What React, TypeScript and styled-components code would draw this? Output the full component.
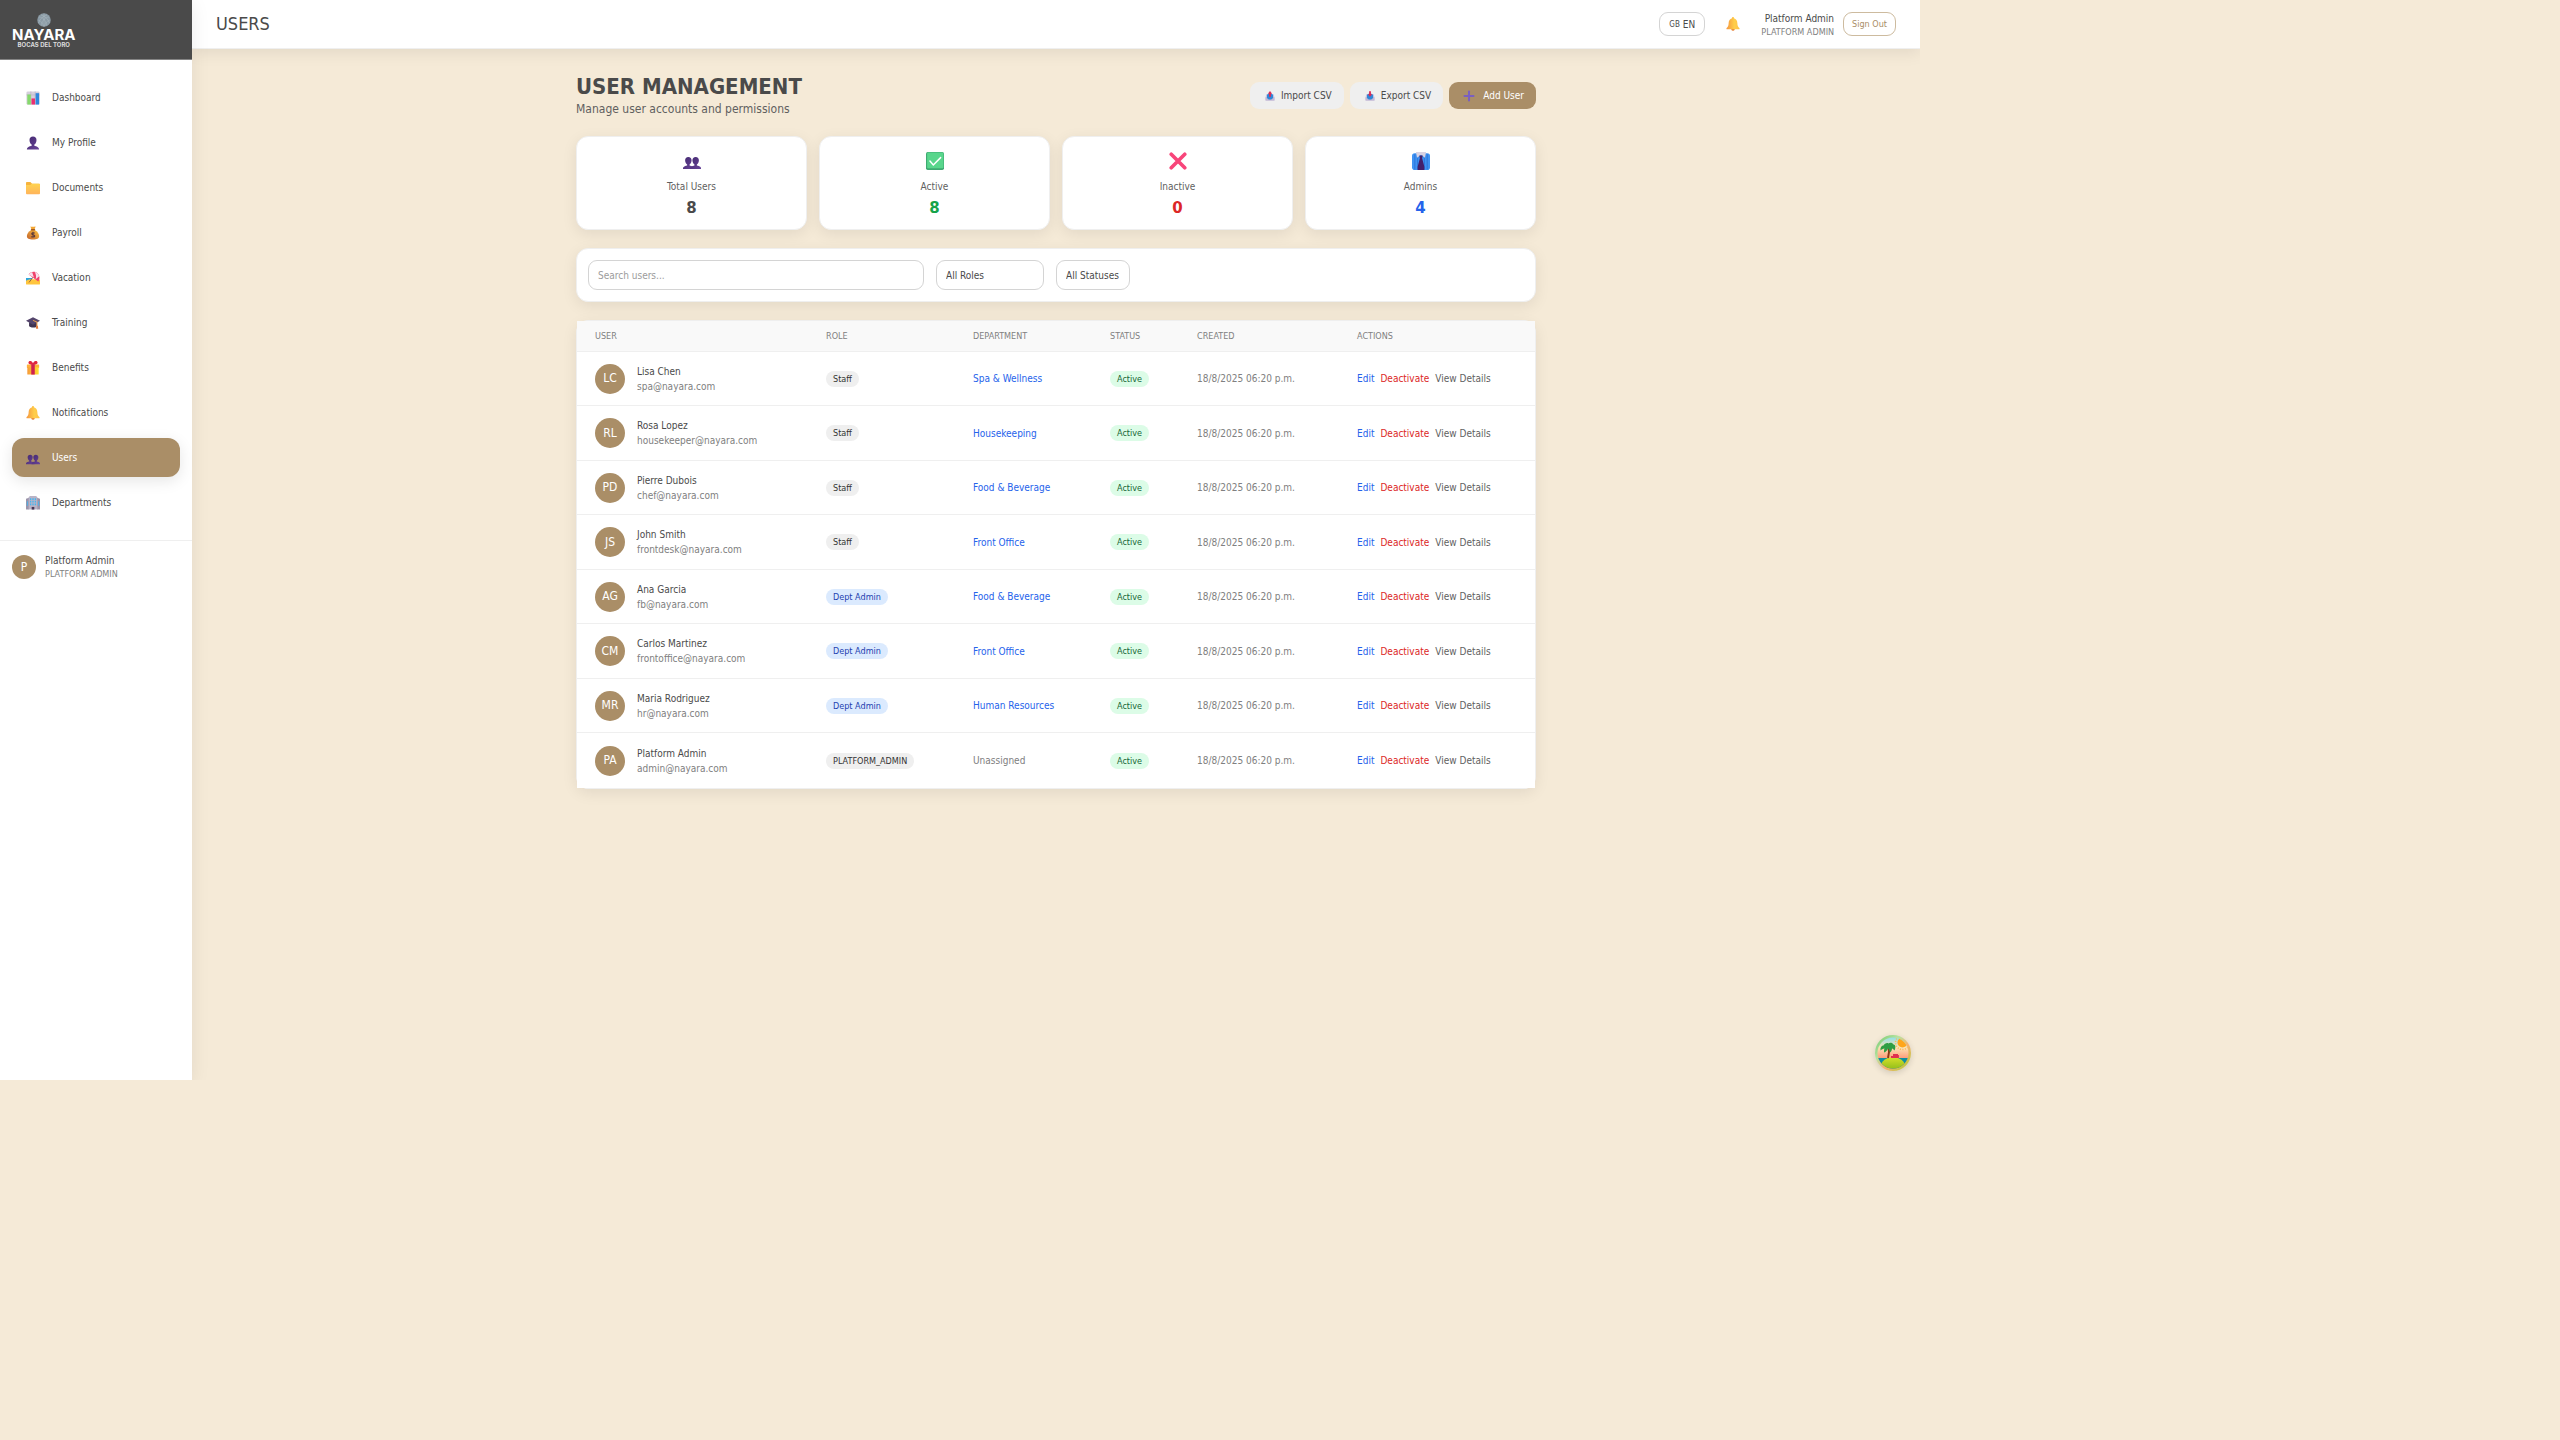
import React from "react";
import styled, { createGlobalStyle, css } from "styled-components";

const sans = `"DejaVu Sans Condensed", Tahoma, "DejaVu Sans", "Noto Sans", sans-serif`;

const color = {
  sand: "#f5ead7",
  brand: "#aa8e67",
  ink: "#4a4a4a",
  body: "#5f5f5f",
  muted: "#808080",
  line: "#efefef",
  field: "#d4d4d4",
  blue: "#2563eb",
  red: "#dc2626",
  green: "#16a34a",
};

const GlobalStyle = createGlobalStyle`
  *, *::before, *::after { box-sizing: border-box; }
  body { margin: 0; background: ${color.sand}; font-family: ${sans}; color: ${color.ink}; }
  h1, h2, p, ul { margin: 0; padding: 0; }
  button, input, select { font-family: inherit; margin: 0; }
  a { text-decoration: none; color: inherit; }
`;

/* ---------- icons ---------- */

const Svg = styled.svg<{ $size: number }>`
  display: block;
  flex: none;
  width: ${(p) => p.$size}px;
  height: ${(p) => p.$size}px;
`;

const Person = ({ x = 0, s = 1, y = 0 }: { x?: number; s?: number; y?: number }) => (
  <g transform={`translate(${x} ${y}) scale(${s})`}>
    <path d="M16 1c5 0 8 3.400 8 8 0 4.500-2 9-5 10.500V22c5 1 11 3 11 9H2c0-6 6-8 11-9v-2.500C10 18 8 13.500 8 9c0-4.600 3-8 8-8z" fill="url(#violet)" />
  </g>
);

const glyphs: Record<string, React.ReactNode> = {
  chart: (
    <>
      <rect x="1" y="1" width="30" height="30" rx="3" fill="#d5cfdc" />
      <path d="M1 9h30M11 1v30M21 1v30" stroke="#b9b1c4" strokeWidth="1.500" />
      <rect x="3" y="8" width="8" height="23" fill="#86d96c" />
      <rect x="12.500" y="17" width="8" height="14" fill="#ea2f70" />
      <rect x="22" y="5" width="8" height="26" fill="#2f86dd" />
    </>
  ),
  person: <Person />,
  people: (
    <>
      <Person x={-2} y={8} s={0.72} />
      <Person x={11} y={8} s={0.72} />
    </>
  ),
  folder: (
    <>
      <path d="M0 4a2 2 0 0 1 2-2h8l4 4h16a2 2 0 0 1 2 2v8H0z" fill="#f7b33c" />
      <path d="M0 9h10l3-3h17a2 2 0 0 1 2 2v20a2 2 0 0 1-2 2H2a2 2 0 0 1-2-2z" fill="url(#folder)" />
    </>
  ),
  money: (
    <>
      <path d="M10 1c4 2 8 0 12 0l-3 8h-6z" fill="#f3a633" />
      <path d="M12 9h8c6 3 10 9 10 14 0 6-5 8-14 8S2 29 2 23c0-5 4-11 10-14z" fill="url(#gold)" />
      <rect x="11" y="7" width="10" height="3" rx="1.500" fill="#a35a20" />
      <path d="M20 16.500c-1-1.500-7-2-7 1.200 0 3 7 2 7 5.300s-7 2.500-8 .800M16 13v13" fill="none" stroke="#5b3a3a" strokeWidth="2.400" />
    </>
  ),
  beach: (
    <>
      <path d="M0 16h14l-2 8H0z" fill="#2ba4dc" />
      <path d="M0 22c8-4 20-3 32-2v9a2 2 0 0 1-2 2H2a2 2 0 0 1-2-2z" fill="#ffc53d" />
      <path d="M17 13L7 26" stroke="#8a5a3c" strokeWidth="2" />
      <path d="M6 8C10 1 20 0 26 5s6 13 2 19z" fill="#f0426b" />
      <path d="M6 8c2-3 5-5 8-6l4 13zM20 2c5 1 9 5 10 10l-8 7c2-6 1-12-2-17z" fill="#f5e3ee" />
    </>
  ),
  cap: (
    <>
      <path d="M7 14v9c0 4 18 5 18 0v-9z" fill="#3f3350" />
      <path d="M16 3l16 8-16 9L0 11z" fill="#54456c" />
      <path d="M16 10l9 4v13" fill="none" stroke="#f0a04b" strokeWidth="2.400" />
      <path d="M23 22h4l1 7h-5z" fill="#e57a3a" />
    </>
  ),
  gift: (
    <>
      <rect x="2" y="8" width="28" height="8" rx="1" fill="#ffb13b" />
      <rect x="3" y="14" width="26" height="17" rx="1" fill="url(#gift)" />
      <rect x="12" y="7" width="8" height="24" fill="#cf2150" />
      <path d="M16 8C8 9 4 6 6 2s8-2 10 3c2-5 8-7 10-3s-2 7-10 6z" fill="#e0263f" />
    </>
  ),
  bell: (
    <>
      <circle cx="16" cy="28" r="3.500" fill="#e57f35" />
      <path d="M16 0c1.500 0 2.300 1 2.300 2.600C23 4 26 8 26 14c0 6 2 8 4.500 11 1 1.500.500 3-1 3h-27c-1.500 0-2-1.500-1-3C4 22 6 20 6 14c0-6 3-10 7.700-11.400C13.700 1 14.500 0 16 0z" fill="url(#bell)" />
    </>
  ),
  building: (
    <>
      <path d="M0 6l7-2v27H0zM32 6l-7-2v27h7z" fill="#9b94aa" />
      <path d="M6 3l3-3h14l3 3v28H6z" fill="#b9b3c6" />
      <path d="M9 5h3v4H9zM14.500 5h3v4h-3zM20 5h3v4h-3zM9 11h3v4H9zM14.500 11h3v4h-3zM20 11h3v4h-3zM9 17h3v4H9zM14.500 17h3v4h-3zM20 17h3v4h-3zM2 12h2v10H2zM28 12h2v10h-2z" fill="#41b6f2" />
      <path d="M13 25h6v6h-6z" fill="#453655" />
    </>
  ),
  check: (
    <>
      <rect x="0" y="0" width="32" height="32" rx="3" fill="#3faa72" />
      <rect x="2" y="1" width="29" height="28" rx="2" fill="#59d68c" />
      <path d="M7 16l6 7 13-13" fill="none" stroke="#fff" strokeWidth="2.600" strokeLinecap="round" />
    </>
  ),
  cross: <path d="M4 4l24 24M28 4L4 28" stroke="#f8457a" strokeWidth="6.500" strokeLinecap="round" />,
  tie: (
    <>
      <rect x="0" y="2" width="32" height="30" rx="5" fill="#3f93f2" />
      <path d="M5 4v27M10 8v23M22 8v23M27 4v27" stroke="#2a6fd4" strokeWidth="1.500" />
      <path d="M7 0h18l-2 10-7-5-7 5z" fill="#d9d3e3" />
      <path d="M13 6h6l-1 5 4 15v6H10v-6l4-15z" fill="#44206b" />
    </>
  ),
  tray: (
    <>
      <path d="M4 10h24l3 12H1z" fill="#d6cee3" />
      <rect x="1" y="20" width="30" height="11" rx="2" fill="#c3b9d6" />
      <path d="M6 12l5-3h10l5 3v10l-6 5h-8l-6-5z" fill="#2f86d8" />
    </>
  ),
  up: <path d="M16 0l7 9h-4v9h-6V9H9z" fill="#dc2b55" />,
  down: <path d="M16 18l7-8h-4V1h-6v9H9z" fill="#dc2b55" />,
  plus: <path d="M16 4v24M4 16h24" stroke="#7a5fc0" strokeWidth="5.500" strokeLinecap="round" />,
};

const Icon = ({ names, size }: { names: string[]; size: number }) => (
  <Svg $size={size} viewBox="0 0 32 32" aria-hidden="true">
    {names.map((n) => (
      <React.Fragment key={n}>{glyphs[n]}</React.Fragment>
    ))}
  </Svg>
);

const Gradients = () => (
  <Svg $size={0} aria-hidden="true">
    <defs>
      <linearGradient id="violet" x1="0" y1="0" x2="1" y2="1">
        <stop offset="0" stopColor="#43296f" />
        <stop offset="1" stopColor="#694499" />
      </linearGradient>
      <linearGradient id="folder" x1="0" y1="0" x2="0" y2="1">
        <stop offset="0" stopColor="#ffd44f" />
        <stop offset="1" stopColor="#ffb45b" />
      </linearGradient>
      <linearGradient id="gold" x1="1" y1="0" x2="0" y2="1">
        <stop offset="0" stopColor="#ffc341" />
        <stop offset="1" stopColor="#c2632c" />
      </linearGradient>
      <linearGradient id="gift" x1="0" y1="0" x2="1" y2="0">
        <stop offset="0" stopColor="#f79a3a" />
        <stop offset="1" stopColor="#ffe02e" />
      </linearGradient>
      <linearGradient id="bell" x1="0" y1="0" x2="1" y2="0">
        <stop offset="0" stopColor="#f5963f" />
        <stop offset="0.6" stopColor="#ffce4a" />
        <stop offset="1" stopColor="#ffc24a" />
      </linearGradient>
    </defs>
  </Svg>
);

const Island = () => (
  <Svg $size={36} viewBox="0 0 36 36" aria-hidden="true">
    <defs>
      <linearGradient id="rim" x1="0" y1="0" x2="1" y2="1">
        <stop offset="0" stopColor="#6cc76c" />
        <stop offset="0.35" stopColor="#b8e3a0" />
        <stop offset="0.6" stopColor="#f6b070" />
        <stop offset="1" stopColor="#a5d32c" />
      </linearGradient>
      <linearGradient id="sky" x1="0" y1="0" x2="0" y2="1">
        <stop offset="0" stopColor="#78def4" />
        <stop offset="0.35" stopColor="#fbe3b4" />
        <stop offset="0.7" stopColor="#ff8f70" />
      </linearGradient>
      <linearGradient id="hill" x1="0" y1="0" x2="0" y2="1">
        <stop offset="0" stopColor="#d8e02a" />
        <stop offset="1" stopColor="#6fae12" />
      </linearGradient>
      <clipPath id="disc">
        <circle cx="18" cy="18" r="15.500" />
      </clipPath>
    </defs>
    <circle cx="18" cy="18" r="18" fill="url(#rim)" />
    <g clipPath="url(#disc)">
      <rect width="36" height="36" fill="url(#sky)" />
      <circle cx="27.500" cy="7.500" r="7" fill="none" stroke="#ffb648" strokeWidth="1.500" strokeDasharray="1 1.500" />
      <circle cx="27.500" cy="7.500" r="5" fill="#ffa61a" />
      <rect y="23" width="36" height="13" fill="#0f8f9f" />
      <ellipse cx="18" cy="31" rx="12" ry="9" fill="url(#hill)" />
      <path d="M16 22h7v-2M18 20h5" stroke="#e0304f" strokeWidth="1.800" fill="none" />
      <path d="M13.500 12c1 4 .500 8-.500 11" stroke="#8d3b14" strokeWidth="2" fill="none" />
    </g>
    <path
      d="M13.500 8.500c1-1 4-1 5 1 2 0 2.500 3 1 6-1-1-1.500-2-2.500-2 0 2-1 3-2 4-.500-2-1-3-2-4-1 2-2 3.500-4 4 0-2 0-3 .500-4-1.500 0-3 1-4 2-.500-3 1-5 3-5 1-2 3.500-3 5-2z"
      fill="#2f9e44"
    />
  </Svg>
);

/* ---------- shell ---------- */

const Shell = styled.div`
  position: relative;
  display: flex;
  width: 75vw;
  min-height: 75vh;
  overflow: hidden;
`;

const Sidebar = styled.aside`
  position: relative;
  z-index: 1;
  flex: none;
  width: 192px;
  background: #fff;
  box-shadow: 0 4px 18px rgba(0, 0, 0, 0.08);
`;

const Brand = styled.div`
  display: flex;
  height: 60px;
  padding: 0 12px;
  background: ${color.ink};
  border-bottom: 1px solid #848484;
`;

const Logo = styled.div`
  display: flex;
  flex-direction: column;
  align-items: center;
  padding-top: 13px;
  color: #fff;
  font-family: Inter, sans-serif;
  font-weight: 700;
  white-space: nowrap;
`;

const LogoName = styled.span`
  margin-top: 1px;
  font-size: 15px;
  line-height: 14px;
`;

const LogoPlace = styled.span`
  font-size: 6px;
  line-height: 6px;
  color: #dcdcdc;
`;

const NavList = styled.ul`
  display: flex;
  flex-direction: column;
  gap: 6px;
  padding: 18px 12px;
  list-style: none;
`;

const NavLink = styled.a<{ $active?: boolean }>`
  display: flex;
  align-items: center;
  gap: 12px;
  height: 39px;
  padding: 0 14px;
  border-radius: 12px;
  font-size: 10px;
  line-height: 15px;
  ${(p) =>
    p.$active &&
    css`
      background: ${color.brand};
      color: #fff;
      box-shadow: 0 4px 15px rgba(0, 0, 0, 0.1);
    `}
`;

const Account = styled.div`
  display: flex;
  align-items: center;
  gap: 9px;
  padding: 12px;
  border-top: 1px solid ${color.line};
`;

const Avatar = styled.span<{ $size: number }>`
  display: flex;
  flex: none;
  align-items: center;
  justify-content: center;
  width: ${(p) => p.$size}px;
  height: ${(p) => p.$size}px;
  border-radius: 50%;
  background: ${color.brand};
  color: #fff;
  font-size: 12px;
`;

const Identity = styled.div<{ $right?: boolean }>`
  text-align: ${(p) => (p.$right ? "right" : "left")};
`;

const IdentityName = styled.p`
  font-size: 10px;
  line-height: 15px;
`;

const IdentityRole = styled.p`
  font-size: 9px;
  line-height: 12px;
  color: ${color.muted};
`;

const Page = styled.div`
  flex: 1;
  min-width: 0;
`;

const TopBar = styled.header`
  display: flex;
  align-items: center;
  justify-content: space-between;
  height: 49px;
  padding: 0 24px;
  background: #fff;
  border-bottom: 1px solid ${color.line};
  box-shadow: 0 4px 15px rgba(0, 0, 0, 0.08);
`;

const TopTitle = styled.h2`
  font-size: 18px;
  line-height: 24px;
  font-weight: 400;
`;

const TopTools = styled.div`
  display: flex;
  align-items: center;
  gap: 9px;
`;

const OutlineButton = styled.button<{ $brand?: boolean }>`
  display: flex;
  align-items: center;
  gap: 3px;
  height: 24px;
  padding: 0 ${(p) => (p.$brand ? 8 : 9)}px;
  border: 1px solid ${(p) => (p.$brand ? "#cdbb9f" : color.field)};
  border-radius: 9px;
  background: #fff;
  color: ${(p) => (p.$brand ? color.brand : color.ink)};
  font-size: ${(p) => (p.$brand ? 9 : 10)}px;
`;

const Flag = styled.span`
  font-size: 8px;
`;

const BellButton = styled.button`
  padding: 6px 12px;
  border: 0;
  background: none;
`;

/* ---------- content ---------- */

const Content = styled.main`
  display: flex;
  flex-direction: column;
  gap: 18px;
  max-width: 960px;
  margin: 0 auto;
  padding: 24px 0;
`;

const PageHead = styled.div`
  display: flex;
  align-items: center;
  justify-content: space-between;
`;

const PageTitle = styled.h1`
  font-size: 22px;
  line-height: 27px;
  font-weight: 700;
`;

const PageNote = styled.p`
  font-size: 12px;
  line-height: 18px;
  color: ${color.body};
`;

const Actions = styled.div`
  display: flex;
  gap: 6px;
`;

const Button = styled.button<{ $primary?: boolean }>`
  display: flex;
  align-items: center;
  gap: ${(p) => (p.$primary ? 8 : 6)}px;
  height: 27px;
  padding: 0 12px 0 ${(p) => (p.$primary ? 14 : 15)}px;
  border: 0;
  border-radius: 9px;
  background: ${(p) => (p.$primary ? color.brand : color.line)};
  color: ${(p) => (p.$primary ? "#fff" : color.ink)};
  font-size: 10px;
`;

const Stats = styled.section`
  display: grid;
  grid-template-columns: repeat(4, 1fr);
  gap: 12px;
`;

const panel = css`
  background: #fff;
  border: 1px solid ${color.line};
  border-radius: 12px;
  box-shadow: 0 4px 15px rgba(0, 0, 0, 0.08);
`;

const StatCard = styled.div`
  ${panel}
  display: flex;
  flex-direction: column;
  align-items: center;
  padding: 15px 12px 11px;
`;

const StatLabel = styled.p`
  margin: 9px 0 4px;
  font-size: 10px;
  line-height: 15px;
  color: ${color.body};
`;

const StatValue = styled.p<{ $color: string }>`
  font-family: "DejaVu Sans", Verdana, sans-serif;
  font-size: 15px;
  line-height: 20px;
  font-weight: 700;
  color: ${(p) => p.$color};
`;

const Filters = styled.form`
  ${panel}
  display: flex;
  gap: 12px;
  padding: 11px;
`;

const field = css`
  height: 30px;
  padding: 0 9px;
  border: 1px solid ${color.field};
  border-radius: 9px;
  background: #fff;
  color: ${color.ink};
  font-size: 10px;
`;

const SearchBox = styled.input`
  ${field}
  flex: 0 1 336px;
  &::placeholder {
    color: #9c9c9c;
    opacity: 1;
  }
`;

const Picker = styled.select<{ $width: number }>`
  ${field}
  appearance: none;
  width: ${(p) => p.$width}px;
`;

const TableCard = styled.section`
  ${panel}
`;

const Table = styled.table`
  width: 100%;
  table-layout: fixed;
  border-collapse: separate;
  border-spacing: 0;
  background: #fff;
`;

const Col = styled.col<{ $width?: number }>`
  width: ${(p) => (p.$width ? `${p.$width}px` : "auto")};
`;

const HeadCell = styled.th`
  height: 31px;
  padding: 0 18px;
  background: #f9f9f9;
  border-bottom: 1px solid ${color.line};
  color: ${color.muted};
  font-size: 9px;
  font-weight: 400;
  line-height: 12px;
  text-align: left;
`;

const Row = styled.tr`
  &:nth-child(even) > td {
    height: 55px;
  }
`;

const Cell = styled.td`
  height: 54px;
  padding: 0 18px;
  border-bottom: 1px solid ${color.line};
  color: ${color.muted};
  font-size: 10px;
  line-height: 15px;
  white-space: nowrap;
  ${Row}:last-child > & {
    border-bottom: 0;
  }
`;

const UserBox = styled.div`
  display: flex;
  align-items: center;
  gap: 12px;
`;

const UserName = styled.p`
  color: ${color.ink};
`;

const tones = {
  plain: { bg: "#efefef", fg: "#333333" },
  blue: { bg: "#dbeafe", fg: "#1e40af" },
  green: { bg: "#dcfce7", fg: "#166534" },
};

const Badge = styled.span<{ $tone: keyof typeof tones }>`
  display: inline-block;
  padding: 2px 7px;
  border-radius: 8px;
  background: ${(p) => tones[p.$tone].bg};
  color: ${(p) => tones[p.$tone].fg};
  font-size: 9px;
  line-height: 12px;
  vertical-align: middle;
`;

const TextLink = styled.a`
  color: ${color.blue};
`;

const RowActions = styled.div`
  display: flex;
  gap: 6px;
`;

const TextButton = styled.button<{ $color: string }>`
  padding: 0;
  border: 0;
  background: none;
  color: ${(p) => p.$color};
  font-size: 10px;
  line-height: 15px;
`;

const DevTools = styled.button`
  position: absolute;
  right: 9px;
  bottom: 9px;
  z-index: 2;
  padding: 0;
  border: 0;
  border-radius: 50%;
  background: none;
  box-shadow: 0 2px 6px rgba(0, 0, 0, 0.14);
`;

/* ---------- data ---------- */

const nav = [
  ["chart", "Dashboard"],
  ["person", "My Profile"],
  ["folder", "Documents"],
  ["money", "Payroll"],
  ["beach", "Vacation"],
  ["cap", "Training"],
  ["gift", "Benefits"],
  ["bell", "Notifications"],
  ["people", "Users"],
  ["building", "Departments"],
];

const stats = [
  { icon: "people", label: "Total Users", value: 8, tint: color.ink },
  { icon: "check", label: "Active", value: 8, tint: color.green },
  { icon: "cross", label: "Inactive", value: 0, tint: color.red },
  { icon: "tie", label: "Admins", value: 4, tint: color.blue },
];

const columns: [string, number?][] = [
  ["USER", 231],
  ["ROLE", 147],
  ["DEPARTMENT", 137],
  ["STATUS", 87],
  ["CREATED", 160],
  ["ACTIONS"],
];

const users: [string, string, string, string, string][] = [
  ["LC", "Lisa Chen", "spa@nayara.com", "Staff", "Spa & Wellness"],
  ["RL", "Rosa Lopez", "housekeeper@nayara.com", "Staff", "Housekeeping"],
  ["PD", "Pierre Dubois", "chef@nayara.com", "Staff", "Food & Beverage"],
  ["JS", "John Smith", "frontdesk@nayara.com", "Staff", "Front Office"],
  ["AG", "Ana Garcia", "fb@nayara.com", "Dept Admin", "Food & Beverage"],
  ["CM", "Carlos Martinez", "frontoffice@nayara.com", "Dept Admin", "Front Office"],
  ["MR", "Maria Rodriguez", "hr@nayara.com", "Dept Admin", "Human Resources"],
  ["PA", "Platform Admin", "admin@nayara.com", "PLATFORM_ADMIN", ""],
];

export default function App() {
  return (
    <>
      <GlobalStyle />
      <Gradients />
      <Shell>
        <Sidebar>
          <Brand>
            <Logo>
              <Svg $size={14} viewBox="0 0 28 28" aria-hidden="true">
                <circle cx="14" cy="14" r="13.500" fill="#8a9aa5" />
                <path
                  d="M4 8c7 0 13 6 16 17M8 4c8 2 14 8 17 16M3 15c6 1 8 5 10 12M24 8c-7 0-13 6-16 17M20 4C12 6 6 12 3 20M25 15c-6 1-8 5-10 12M14 1v26"
                  fill="none"
                  stroke="#b4c0c8"
                  strokeWidth="0.800"
                />
              </Svg>
              <LogoName>NAYARA</LogoName>
              <LogoPlace>BOCAS DEL TORO</LogoPlace>
            </Logo>
          </Brand>
          <nav>
            <NavList>
              {nav.map(([icon, label]) => (
                <li key={label}>
                  <NavLink href="#" $active={label === "Users"}>
                    <Icon names={[icon]} size={14} />
                    {label}
                  </NavLink>
                </li>
              ))}
            </NavList>
          </nav>
          <Account>
            <Avatar $size={24}>P</Avatar>
            <Identity>
              <IdentityName>Platform Admin</IdentityName>
              <IdentityRole>PLATFORM ADMIN</IdentityRole>
            </Identity>
          </Account>
        </Sidebar>

        <Page>
          <TopBar>
            <TopTitle>USERS</TopTitle>
            <TopTools>
              <OutlineButton>
                <Flag>GB</Flag>EN
              </OutlineButton>
              <BellButton aria-label="Notifications">
                <Icon names={["bell"]} size={14} />
              </BellButton>
              <Identity $right>
                <IdentityName>Platform Admin</IdentityName>
                <IdentityRole>PLATFORM ADMIN</IdentityRole>
              </Identity>
              <OutlineButton $brand>Sign Out</OutlineButton>
            </TopTools>
          </TopBar>

          <Content>
            <PageHead>
              <div>
                <PageTitle>USER MANAGEMENT</PageTitle>
                <PageNote>Manage user accounts and permissions</PageNote>
              </div>
              <Actions>
                <Button>
                  <Icon names={["tray", "up"]} size={10} />
                  Import CSV
                </Button>
                <Button>
                  <Icon names={["tray", "down"]} size={10} />
                  Export CSV
                </Button>
                <Button $primary>
                  <Icon names={["plus"]} size={12} />
                  Add User
                </Button>
              </Actions>
            </PageHead>

            <Stats>
              {stats.map((s) => (
                <StatCard key={s.label}>
                  <Icon names={[s.icon]} size={18} />
                  <StatLabel>{s.label}</StatLabel>
                  <StatValue $color={s.tint}>{s.value}</StatValue>
                </StatCard>
              ))}
            </Stats>

            <Filters>
              <SearchBox type="text" placeholder="Search users..." aria-label="Search users" />
              <Picker $width={108} aria-label="Role">
                <option>All Roles</option>
              </Picker>
              <Picker $width={74} aria-label="Status">
                <option>All Statuses</option>
              </Picker>
            </Filters>

            <TableCard>
              <Table>
                <colgroup>
                  {columns.map(([name, width]) => (
                    <Col key={name} $width={width} />
                  ))}
                </colgroup>
                <thead>
                  <tr>
                    {columns.map(([name]) => (
                      <HeadCell key={name} scope="col">
                        {name}
                      </HeadCell>
                    ))}
                  </tr>
                </thead>
                <tbody>
                  {users.map(([initials, name, email, role, dept]) => (
                    <Row key={email}>
                      <Cell>
                        <UserBox>
                          <Avatar $size={30}>{initials}</Avatar>
                          <div>
                            <UserName>{name}</UserName>
                            <p>{email}</p>
                          </div>
                        </UserBox>
                      </Cell>
                      <Cell>
                        <Badge $tone={role === "Dept Admin" ? "blue" : "plain"}>{role}</Badge>
                      </Cell>
                      <Cell>{dept ? <TextLink href="#">{dept}</TextLink> : "Unassigned"}</Cell>
                      <Cell>
                        <Badge $tone="green">Active</Badge>
                      </Cell>
                      <Cell>18/8/2025 06:20 p.m.</Cell>
                      <Cell>
                        <RowActions>
                          <TextButton $color={color.blue}>Edit</TextButton>
                          <TextButton $color={color.red}>Deactivate</TextButton>
                          <TextButton $color={color.body}>View Details</TextButton>
                        </RowActions>
                      </Cell>
                    </Row>
                  ))}
                </tbody>
              </Table>
            </TableCard>
          </Content>
        </Page>

        <DevTools aria-label="Open query tools">
          <Island />
        </DevTools>
      </Shell>
    </>
  );
}
